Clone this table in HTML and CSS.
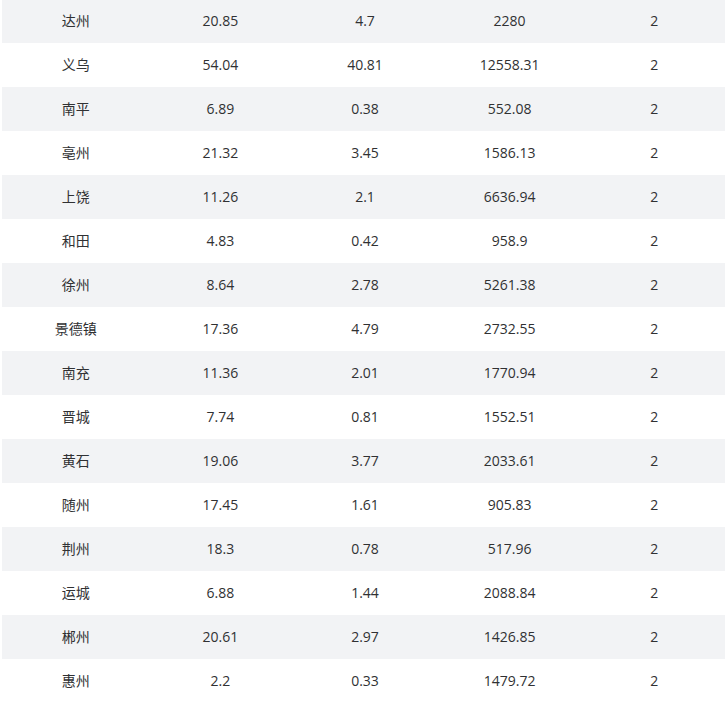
FILE: index.html
```html
<!DOCTYPE html>
<html lang="zh">
<head>
<meta charset="utf-8">
<link rel="stylesheet" href="styles.css">
</head>
<body>
<div class="wrap">
<table class="data">
<tbody>
<tr><td>达州</td><td>20.85</td><td>4.7</td><td>2280</td><td>2</td></tr>
<tr><td>义乌</td><td>54.04</td><td>40.81</td><td>12558.31</td><td>2</td></tr>
<tr><td>南平</td><td>6.89</td><td>0.38</td><td>552.08</td><td>2</td></tr>
<tr><td>亳州</td><td>21.32</td><td>3.45</td><td>1586.13</td><td>2</td></tr>
<tr><td>上饶</td><td>11.26</td><td>2.1</td><td>6636.94</td><td>2</td></tr>
<tr><td>和田</td><td>4.83</td><td>0.42</td><td>958.9</td><td>2</td></tr>
<tr><td>徐州</td><td>8.64</td><td>2.78</td><td>5261.38</td><td>2</td></tr>
<tr><td>景德镇</td><td>17.36</td><td>4.79</td><td>2732.55</td><td>2</td></tr>
<tr><td>南充</td><td>11.36</td><td>2.01</td><td>1770.94</td><td>2</td></tr>
<tr><td>晋城</td><td>7.74</td><td>0.81</td><td>1552.51</td><td>2</td></tr>
<tr><td>黄石</td><td>19.06</td><td>3.77</td><td>2033.61</td><td>2</td></tr>
<tr><td>随州</td><td>17.45</td><td>1.61</td><td>905.83</td><td>2</td></tr>
<tr><td>荆州</td><td>18.3</td><td>0.78</td><td>517.96</td><td>2</td></tr>
<tr><td>运城</td><td>6.88</td><td>1.44</td><td>2088.84</td><td>2</td></tr>
<tr><td>郴州</td><td>20.61</td><td>2.97</td><td>1426.85</td><td>2</td></tr>
<tr><td>惠州</td><td>2.2</td><td>0.33</td><td>1479.72</td><td>2</td></tr>
</tbody>
</table>
</div>
</body>
</html>
```
FILE: styles.css
```css
html, body {
  margin: 0;
  padding: 0;
  background: #ffffff;
}
.wrap {
  padding: 0 3px 0 2px;
  margin-top: -1px;
}
.data {
  width: 723px;
  border-collapse: collapse;
  table-layout: fixed;
  font-family: "Segoe UI", "Open Sans", "Noto Sans CJK SC", sans-serif;
  font-size: 14px;
  line-height: 20px;
  color: #303133;
}
.data td {
  height: 43px;
  padding: 0 0 1px 3px;
  text-align: center;
  vertical-align: middle;
}
.data tr:nth-child(odd) {
  background: #f2f3f5;
}
```
